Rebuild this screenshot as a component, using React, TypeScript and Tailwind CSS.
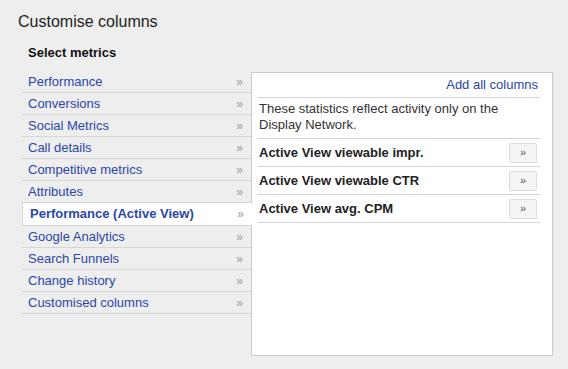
const groups = [
  'Performance',
  'Conversions',
  'Social Metrics',
  'Call details',
  'Competitive metrics',
  'Attributes',
  'Performance (Active View)',
  'Google Analytics',
  'Search Funnels',
  'Change history',
  'Customised columns',
];

const metrics = ['Active View viewable impr.', 'Active View viewable CTR', 'Active View avg. CPM'];

const active = 'Performance (Active View)';

export default function App() {
  return (
    <div className="w-[568px] h-[369px] bg-[#eeeeee] font-['Liberation_Sans',Arial,sans-serif] text-[13px] overflow-hidden">
      <h1 className="pl-[18px] pt-[12px] text-[16px] leading-[20px] text-[#222]">Customise columns</h1>
      <h2 className="pl-[28px] pt-[12px] font-bold text-[13px] leading-[18px] text-[#111]">Select metrics</h2>

      <div className="flex pl-[22px] pt-[9px]">
        <ul className="w-[229px] shrink-0">
          {groups.map((g) =>
            g === active ? (
              <li
                key={g}
                className="relative z-10 -mr-px h-[23px] flex items-center justify-between bg-white border-l border-b border-[#d6d6d6] pl-[7px] pr-[8px]"
              >
                <span className="font-bold text-[#2a47a8]">{g}</span>
                <span className="text-[#9a9a9a] text-[12px]">»</span>
              </li>
            ) : (
              <li
                key={g}
                className="h-[22px] flex items-center justify-between border-b border-[#d6d6d6] pl-[6px] pr-[8px]"
              >
                <span className="text-[#2a47a8]">{g}</span>
                <span className="text-[#9a9a9a] text-[12px]">»</span>
              </li>
            )
          )}
        </ul>

        <div className="mt-px w-[302px] h-[284px] bg-white border border-[#c9c9c9] pl-[6px] pr-[12px]">
          <div className="h-[25px] flex items-center justify-end border-b border-[#d3d3d3] pr-[2px]">
            <a className="text-[#2a47a8] cursor-pointer">Add all columns</a>
          </div>
          <p className="h-[41px] border-b border-[#d3d3d3] pt-[3px] pl-px leading-[16px] text-[#333]">
            These statistics reflect activity only on the Display Network.
          </p>
          {metrics.map((m) => (
            <div key={m} className="h-[28px] flex items-center justify-between border-b border-[#d3d3d3] pl-px pr-[3px]">
              <span className="font-bold text-[#222]">{m}</span>
              <button className="w-[28px] h-[20px] flex items-center justify-center bg-[#f5f5f5] border border-[#dcdcdc] rounded-[2px] text-[#555] text-[11px]">
                »
              </button>
            </div>
          ))}
        </div>
      </div>
    </div>
  );
}
